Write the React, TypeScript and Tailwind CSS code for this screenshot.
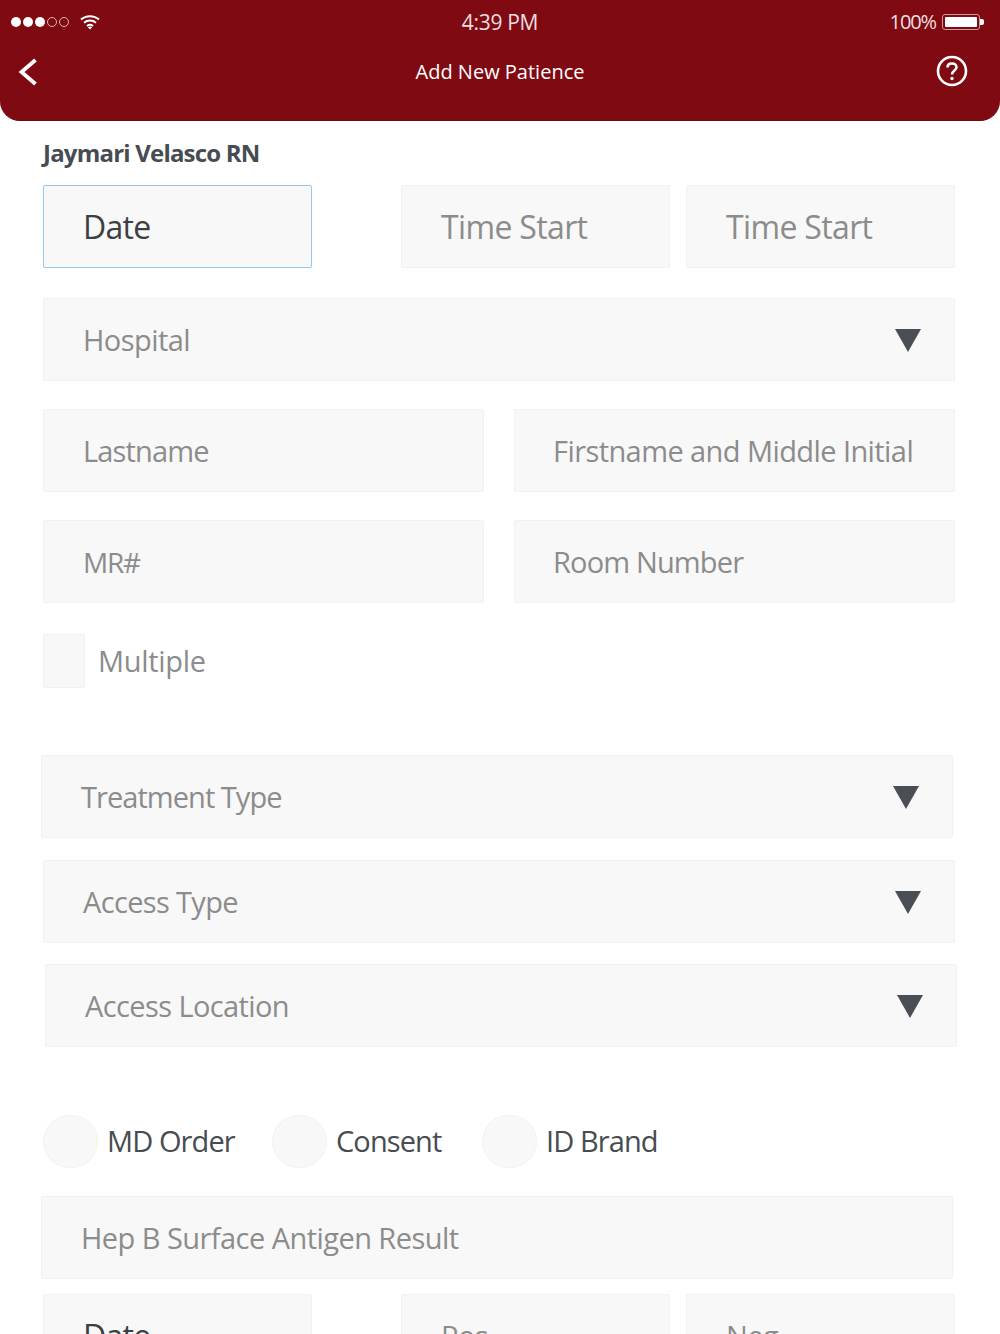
import React from "react";

const box = "h-[83px] bg-[#f8f8f8] border border-[#f1f1f1] rounded-[2px] flex items-center";
const ph = "text-[29px] tracking-[-0.55px] text-[#8c8c8c] leading-none whitespace-nowrap";
const phTight = "text-[29px] tracking-[-0.85px] text-[#8c8c8c] leading-none whitespace-nowrap";
const phMid = "text-[29px] tracking-[-0.65px] text-[#8c8c8c] leading-none whitespace-nowrap";
const dark = "text-[29px] tracking-[-0.9px] text-[#474c52] leading-none whitespace-nowrap -mt-[2px]";
const big = "text-[32px] tracking-[-0.65px] text-[#8c8c8c] leading-none whitespace-nowrap";

function Arrow() {
  return (
    <svg width="26" height="24" viewBox="0 0 26 24" className="shrink-0">
      <path d="M0 1H26L13 24Z" fill="#4a4f56" />
    </svg>
  );
}

function Field({ label, className = "", text = ph }: { label: string; className?: string; text?: string }) {
  return (
    <div className={`${box} pl-[39px] ${className}`}>
      <span className={text}>{label}</span>
    </div>
  );
}

function Select({ label, className = "", text = ph }: { label: string; className?: string; text?: string }) {
  return (
    <div className={`${box} pl-[39px] pr-[33px] justify-between w-[912px] ${className}`}>
      <span className={text}>{label}</span>
      <Arrow />
    </div>
  );
}

function Radio({ label, className = "" }: { label: string; className?: string }) {
  return (
    <div className={`flex items-center gap-[9px] ${className}`}>
      <div className="w-[55px] h-[53px] rounded-full bg-[#f8f8f8] border border-[#f2f2f2]" />
      <span className={dark}>{label}</span>
    </div>
  );
}

export default function App() {
  return (
    <div
      className="w-[1000px] h-[1334px] overflow-hidden bg-white"
      style={{ fontFamily: '"Open Sans", "Noto Sans", sans-serif' }}
    >
      <header className="h-[121px] bg-[#7f0a12] rounded-b-[20px] border-b border-[#6a0a10] text-white flex flex-col">
        <div className="h-[44px] px-[11px] flex items-center justify-between relative">
          <div className="flex items-center gap-[11px]">
            <div className="flex items-center gap-[2px]">
              <span className="w-[10px] h-[10px] rounded-full bg-white" />
              <span className="w-[10px] h-[10px] rounded-full bg-white" />
              <span className="w-[10px] h-[10px] rounded-full bg-white" />
              <span className="w-[10px] h-[10px] rounded-full border border-[#d8b4b7]" />
              <span className="w-[10px] h-[10px] rounded-full border border-[#d8b4b7]" />
            </div>
            <svg width="20" height="16" viewBox="0 0 20 16" fill="none" stroke="#fff" strokeWidth="2">
              <path d="M1 5.5C6 1 14 1 19 5.5" />
              <path d="M4 8.8C7.5 5.8 12.5 5.8 16 8.8" />
              <path d="M7 12C8.8 10.6 11.2 10.6 13 12" />
              <path d="M10 15.5L7.8 13.2C9 12.2 11 12.2 12.2 13.2Z" fill="#fff" stroke="none" />
            </svg>
          </div>
          <span className="absolute left-0 right-0 text-center text-[21px] tracking-[-0.3px] text-[#f0dfe0] leading-none">4:39 PM</span>
          <div className="flex items-center gap-[6px] pr-[9px] relative">
            <span className="text-[20px] tracking-[-1.1px] text-[#f0dfe0] leading-none">100%</span>
            <span className="w-[38px] h-[16px] rounded-[3px] border border-[#c99a9d] p-[2px] flex">
              <span className="flex-1 bg-white rounded-[1px]" />
            </span>
            <span className="absolute right-[5px] w-[4px] h-[6px] bg-white rounded-r-[2px]" />
          </div>
        </div>
        <div className="h-[55px] pl-[18px] pr-[32px] flex items-center justify-between relative">
          <svg width="20" height="28" viewBox="0 0 20 28" fill="none" stroke="#fff" strokeWidth="3.8">
            <path d="M17.5 2L3.5 14L17.5 26" />
          </svg>
          <span className="absolute left-0 right-0 text-center text-[20px] tracking-[0px] leading-none">Add New Patience</span>
          <svg width="32" height="32" viewBox="0 0 32 32" fill="none" stroke="#fff" className="-mt-[1px]">
            <circle cx="16" cy="16" r="14" strokeWidth="2.6" />
            <path d="M11.5 12.5C11.5 9.8 13.5 8.5 16 8.5C18.6 8.5 20.5 10 20.5 12.2C20.5 15.5 16 15.5 16 19.5" strokeWidth="2.6" />
            <circle cx="16" cy="23.5" r="1.7" fill="#fff" stroke="none" />
          </svg>
        </div>
      </header>

      <main className="pl-[43px]">
        <h1 className="mt-[19px] h-[26px] text-[24px] font-bold tracking-[-0.8px] text-[#474c52] leading-[25px]">Jaymari Velasco RN</h1>

        <div className="mt-[19px] flex">
          <div className="w-[269px] h-[83px] bg-[#f8f8f8] border border-[#92c9ec] rounded-[2px] flex items-center pl-[39px]">
            <span className="text-[32px] tracking-[-0.75px] text-[#3c4045] leading-none">Date</span>
          </div>
          <Field label="Time Start" className="w-[269px] ml-[89px]" text={big} />
          <Field label="Time Start" className="w-[269px] ml-[16px]" text={big} />
        </div>

        <Select label="Hospital" className="mt-[30px]" />

        <div className="mt-[28px] flex gap-[30px]">
          <Field label="Lastname" className="w-[441px]" text={phTight} />
          <Field label="Firstname and Middle Initial" className="w-[441px] !pl-[38px]" text="text-[29px] tracking-[-0.58px] text-[#8c8c8c] leading-none whitespace-nowrap" />
        </div>

        <div className="mt-[28px] flex gap-[30px]">
          <Field label="MR#" className="w-[441px]" text="text-[28px] tracking-[-1.2px] text-[#8c8c8c] leading-none whitespace-nowrap" />
          <Field label="Room Number" className="w-[441px] !pl-[38px]" text={phTight} />
        </div>

        <div className="mt-[31px] flex items-center gap-[13px]">
          <div className="w-[42px] h-[54px] bg-[#f8f8f8] border border-[#f1f1f1] rounded-[2px]" />
          <span className="text-[29px] tracking-[-0.3px] text-[#8c8c8c] leading-none whitespace-nowrap -mt-[2px]">Multiple</span>
        </div>

        <Select label="Treatment Type" className="mt-[67px] -ml-[2px]" text="text-[29px] tracking-[-0.95px] text-[#8c8c8c] leading-none whitespace-nowrap" />
        <Select label="Access Type" className="mt-[22px]" text={phMid} />
        <Select label="Access Location" className="mt-[21px] ml-[2px]" text="text-[29px] tracking-[-0.6px] text-[#8c8c8c] leading-none whitespace-nowrap" />

        <div className="mt-[68px] flex">
          <Radio label="MD Order" className="w-[229px]" />
          <Radio label="Consent" className="w-[210px]" />
          <Radio label="ID Brand" />
        </div>

        <Field label="Hep B Surface Antigen Result" className="mt-[28px] -ml-[2px] w-[912px]" />

        <div className="mt-[15px] flex">
          <div className="w-[269px] h-[83px] bg-[#f8f8f8] border border-[#f1f1f1] rounded-[2px] flex items-center pl-[39px]">
            <span className="text-[32px] tracking-[-0.75px] text-[#3c4045] leading-none">Date</span>
          </div>
          <Field label="Pos" className="w-[269px] ml-[89px]" />
          <Field label="Neg" className="w-[269px] ml-[16px]" />
        </div>
      </main>
    </div>
  );
}
